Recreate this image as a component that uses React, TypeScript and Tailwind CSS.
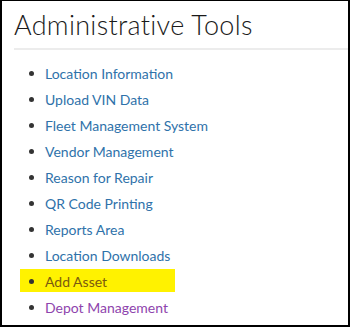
const tools = [
  { label: "Location Information", state: "link" },
  { label: "Upload VIN Data", state: "link" },
  { label: "Fleet Management System", state: "link" },
  { label: "Vendor Management", state: "link" },
  { label: "Reason for Repair", state: "link" },
  { label: "QR Code Printing", state: "link" },
  { label: "Reports Area", state: "link" },
  { label: "Location Downloads", state: "link" },
  { label: "Add Asset", state: "highlight" },
  { label: "Depot Management", state: "visited" },
];

export default function App() {
  return (
    <div className="w-[350px] h-[327px] bg-white overflow-hidden border-t border-l-2 border-r-2 border-b-2 border-black font-['Lato',sans-serif]">
      <div className="pl-[12px] pt-[6px]">
        <h1 className="text-[27px] leading-[36px] font-light text-[#1a1a1a] tracking-[0.3px]">
          Administrative Tools
        </h1>
        <div className="mt-[5px] h-[2px] bg-[#ececec]" />
      </div>

      <ul className="mt-[10px] flex flex-col">
        {tools.map((t) => (
          <li
            key={t.label}
            className={
              t.state === "highlight"
                ? "h-[26px] flex items-center ml-[18px] pl-[9px] w-[155px] bg-[linear-gradient(transparent_1px,#fff200_1px,#fff200_24px,transparent_24px)]"
                : "h-[26px] flex items-center ml-[18px] pl-[9px]"
            }
          >
            <span className="w-[5px] h-[5px] rounded-full bg-[#333] mr-[11px] shrink-0" />
            <a
              href="#"
              className={
                t.state === "visited"
                  ? "text-[14px] text-[#8e44ad]"
                  : t.state === "highlight"
                  ? "text-[14px] text-[#7a5a10]"
                  : "text-[14px] text-[#2f72aa]"
              }
            >
              {t.label}
            </a>
          </li>
        ))}
      </ul>
    </div>
  );
}
